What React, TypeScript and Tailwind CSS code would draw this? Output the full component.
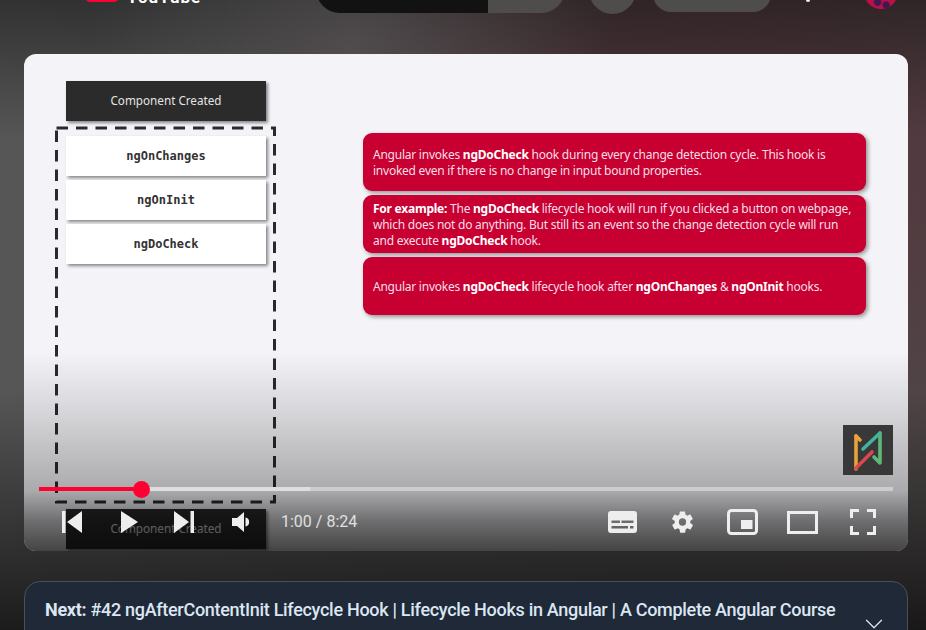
import { ChevronDown } from 'lucide-react';

function SlideBox({ label }: { label: string }) {
  return (
    <div className="flex h-[40px] w-[200px] items-center justify-center bg-white font-['DejaVu_Sans_Mono',monospace] text-[12px] font-semibold text-[#333] shadow-[2px_2px_3px_rgba(0,0,0,0.45)]">
      {label}
    </div>
  );
}

function DarkBox() {
  return (
    <div className="flex h-10 items-center justify-center bg-[#2b2b2b] font-['Noto_Sans',sans-serif] text-[11.7px] text-[#e3e3e3] shadow-[2px_2px_3px_rgba(0,0,0,0.45)]">
      Component Created
    </div>
  );
}

function Callout({ children }: { children: React.ReactNode }) {
  return (
    <div className="flex h-[58px] w-[503px] items-center rounded-[9px] bg-[#c80032] pl-[10px] pr-3 pt-px text-[12px] leading-[16px] tracking-[-0.24px] text-[#f6dfe4] shadow-[2px_2px_4px_rgba(0,0,0,0.4)]">
      <p>{children}</p>
    </div>
  );
}

function B({ children }: { children: React.ReactNode }) {
  return <b className="font-bold text-white">{children}</b>;
}

function ChannelMark() {
  return (
    <div className="absolute left-[819px] top-[371px] h-[50px] w-[50px] bg-[#383838]">
      <svg viewBox="0 0 50 50" className="h-full w-full" fill="none" strokeWidth="3.6" strokeLinecap="round" strokeLinejoin="round">
        <path d="M13 11 V44" stroke="#e9a23b" />
        <path d="M13 11 L17 15" stroke="#e9a23b" />
        <path d="M37 8 V38 L31 32" stroke="#5fb878" />
        <path d="M20 24 L37 8" stroke="#43b39b" />
        <path d="M13 43 L29 27" stroke="#d9474f" />
      </svg>
    </div>
  );
}

function PlayerControls() {
  return (
    <div className="absolute inset-x-0 bottom-0 h-[70px]">
      <div className="absolute left-[15px] right-[15px] top-[6px] h-[4px] bg-white/40">
        <div className="absolute inset-y-0 left-0 w-[271px] bg-white/35" />
        <div className="absolute inset-y-0 left-0 w-[103px] bg-[#ff0033]" />
        <div className="absolute left-[94px] top-[-6.500px] h-[17px] w-[17px] rounded-full bg-[#ff0033]" />
      </div>
      <div className="absolute inset-x-0 top-[27px] flex h-7 items-center">
        <svg viewBox="0 0 20 22" className="ml-[38px] h-[22px] w-5" fill="#eee">
          <path d="M0 0h3.500v22H0zM5 11 20 0v22z" />
        </svg>
        <svg viewBox="0 0 17 22" className="ml-[39px] h-[22px] w-[17px]" fill="#eee">
          <path d="M0 0 17 11 0 22z" />
        </svg>
        <svg viewBox="0 0 20 22" className="ml-[36px] h-[22px] w-5" fill="#eee">
          <path d="M0 0 15 11 0 22zM16.500 0H20v22h-3.500z" />
        </svg>
        <svg viewBox="0 0 18 20" className="ml-[38px] h-5 w-[18px]" fill="#eee">
          <path d="M0 6h5l7-6v20l-7-6H0z" />
          <path d="M13.500 5.500a4.600 4.600 0 0 1 0 9z" />
        </svg>
        <span className="ml-[31px] font-['Roboto',sans-serif] text-[16px] text-[#e0e0e0]">1:00 / 8:24</span>
        <div className="ml-auto mr-[32px] flex items-center">
          <svg viewBox="0 0 29 22" className="h-[22px] w-[29px]" fill="#eee">
            <path fillRule="evenodd" d="M3 0h23a3 3 0 0 1 3 3v16a3 3 0 0 1-3 3H3a3 3 0 0 1-3-3V3a3 3 0 0 1 3-3zM3.500 9.500v2.500H12V9.500zM13.500 9.500v2.500h12V9.500zM3.500 15v2.500H20V15zM22 15v2.500h3.500V15z" />
          </svg>
          <svg viewBox="0 0 24 24" className="ml-[33px] h-[26px] w-[25px]" fill="#eee">
            <path fillRule="evenodd" d="M19.400 13a7.600 7.600 0 0 0 0-2l2.200-1.700a.5.5 0 0 0 .1-.7l-2-3.500a.5.5 0 0 0-.6-.2l-2.600 1a7.500 7.500 0 0 0-1.700-1l-.4-2.700a.5.5 0 0 0-.5-.4h-4a.5.5 0 0 0-.5.4l-.4 2.700a7.500 7.500 0 0 0-1.700 1l-2.600-1a.5.5 0 0 0-.6.2l-2 3.500a.5.5 0 0 0 .1.700L4.600 11a7.600 7.600 0 0 0 0 2l-2.200 1.700a.5.5 0 0 0-.1.700l2 3.500a.5.5 0 0 0 .6.2l2.600-1a7.500 7.500 0 0 0 1.700 1l.4 2.700a.5.5 0 0 0 .5.4h4a.5.5 0 0 0 .5-.4l.4-2.700a7.500 7.500 0 0 0 1.700-1l2.600 1a.5.5 0 0 0 .6-.2l2-3.500a.5.5 0 0 0-.1-.7zM12 15.500a3.500 3.500 0 1 1 0-7 3.500 3.500 0 0 1 0 7z" />
          </svg>
          <svg viewBox="0 0 31 26" className="ml-[32px] h-[26px] w-[31px]" fill="none">
            <rect x="1.500" y="1.500" width="28" height="23" rx="3" stroke="#eee" strokeWidth="3" />
            <rect x="14" y="11" width="11.500" height="9" fill="#eee" />
          </svg>
          <svg viewBox="0 0 31 23" className="ml-[29px] h-[23px] w-[31px]" fill="none">
            <rect x="1.500" y="1.500" width="28" height="20" stroke="#eee" strokeWidth="3" />
          </svg>
          <svg viewBox="0 0 26 26" className="ml-[32px] h-[26px] w-[26px]" fill="none" stroke="#eee" strokeWidth="3">
            <path d="M1.500 9V1.500H9M17 1.500h7.500V9M24.500 17v7.500H17M9 24.500H1.500V17" />
          </svg>
        </div>
      </div>
    </div>
  );
}

function Slide() {
  return (
    <div className="relative ml-6 mt-[40px] h-[497px] w-[884px] overflow-hidden rounded-xl bg-[#f4f3f7]">
      <div className="flex pl-[42px] pt-[27px]">
        <div className="w-[200px]">
          <DarkBox />
          <div className="relative ml-[-10px] mt-[6px] h-[376px] w-[220px] pl-[10px] pt-[9px]">
            <svg viewBox="0 0 220 376" className="absolute inset-0 h-full w-full overflow-visible" fill="none">
              <rect x="0.500" y="1" width="218" height="374" stroke="#2a2a2a" strokeWidth="3" strokeDasharray="11.500 8" />
            </svg>
            <div className="relative flex flex-col gap-[4px]">
              <SlideBox label="ngOnChanges" />
              <SlideBox label="ngOnInit" />
              <SlideBox label="ngDoCheck" />
            </div>
          </div>
          <div className="mt-[6px]">
            <DarkBox />
          </div>
        </div>
        <div className="ml-[97px] flex flex-col gap-[4px] pt-[52px] font-['Noto_Sans',sans-serif]">
          <Callout>
            Angular invokes <B>ngDoCheck</B> hook during every change detection cycle. This hook is invoked even if there is no change in input bound properties.
          </Callout>
          <Callout>
            <B>For example:</B> The <B>ngDoCheck</B> lifecycle hook will run if you clicked a button on webpage, which does not do anything. But still its an event so the change detection cycle will run and execute <B>ngDoCheck</B> hook.
          </Callout>
          <Callout>
            Angular invokes <B>ngDoCheck</B> lifecycle hook after <B>ngOnChanges</B> &amp; <B>ngOnInit</B> hooks.
          </Callout>
        </div>
      </div>
      <div className="absolute inset-x-0 bottom-0 h-[200px] bg-[linear-gradient(to_bottom,rgba(0,0,0,0)_0%,rgba(0,0,0,0.12)_30%,rgba(0,0,0,0.3)_70%,rgba(0,0,0,0.55)_85%,rgba(0,0,0,0.72)_100%)]" />
      <ChannelMark />
      <PlayerControls />
    </div>
  );
}

function TopBar() {
  return (
    <div className="flex h-[14px] items-end overflow-hidden">
      <div className="mb-[12px] ml-[86px] h-5 w-8 shrink-0 rounded-[4px] bg-[#ff0033]" />
      <div className="mb-[9px] ml-[9px] w-[189px] shrink-0 font-['Roboto',sans-serif] text-[17px] font-bold leading-[16px] tracking-[1px] text-white">YouTube</div>
      <div className="mb-[1px] flex h-12 w-[249px] shrink-0 overflow-hidden rounded-full">
        <div className="w-[172px] bg-[#121212]" />
        <div className="flex-1 bg-[#4f4c4c]" />
      </div>
      <div className="ml-[24px] h-[47px] w-[47px] shrink-0 rounded-full bg-[#4f4c4c]" />
      <div className="mb-[2px] ml-[17px] h-9 w-[118px] shrink-0 rounded-full bg-[#4f4c4c]" />
      <div className="mb-[12px] ml-[35px] h-1 w-1 shrink-0 rounded-full bg-white" />
      <div className="mb-[5px] ml-[54px] h-[34px] w-[34px] shrink-0 rounded-full bg-[radial-gradient(circle_at_40%_80%,#3a1a50_0%,#3a1a50_8%,rgba(58,26,80,0)_14%),radial-gradient(circle_at_65%_88%,#3a1a50_0%,#3a1a50_7%,rgba(58,26,80,0)_12%),linear-gradient(#b0103c,#c01048)]" />
    </div>
  );
}

export default function App() {
  return (
    <div className="relative h-[630px] w-[926px] overflow-hidden bg-[radial-gradient(ellipse_at_38%_7%,rgba(120,120,120,0.35)_0%,rgba(120,120,120,0)_32%),linear-gradient(to_bottom,rgba(0,0,0,0.42)_0%,rgba(0,0,0,0)_22%,rgba(0,0,0,0)_62%,rgba(0,0,0,0.68)_100%),radial-gradient(ellipse_at_76%_26%,#55323a_0%,rgba(85,50,58,0)_55%),linear-gradient(to_right,#565656_0%,#4f4f4f_40%,#4e4a4a_100%)]">
      <TopBar />
      <Slide />
      <div className="relative ml-6 mt-[30px] h-[60px] w-[884px] rounded-t-[16px] border border-[#4a5058] bg-[#1f2937] pl-5 pt-[14px] font-['Roboto',sans-serif] text-[18px] font-medium leading-[28px] tracking-[-0.3px] text-[#dbe6f3]">
        <b className="font-bold">Next:</b> #42 ngAfterContentInit Lifecycle Hook | Lifecycle Hooks in Angular | A Complete Angular Course
        <ChevronDown className="absolute left-[834px] top-[27px] h-[30px] w-[30px]" strokeWidth={1} />
      </div>
    </div>
  );
}
